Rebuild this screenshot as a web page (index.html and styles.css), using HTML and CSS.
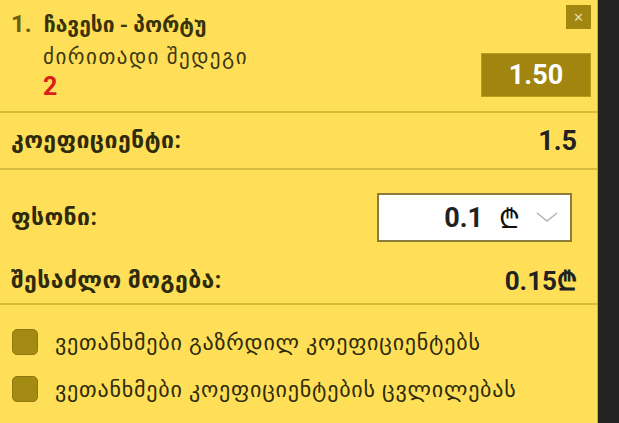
FILE: index.html
```html
<!DOCTYPE html>
<html lang="ka">
<head>
  <meta charset="UTF-8">
  <title>ბილეთი</title>
  <link rel="stylesheet" href="styles.css">
</head>
<body>
  <div class="page">
    <div class="slip">
      <div class="event">
        <div class="event-info">
          <div class="event-title"><span class="num">1.</span><span class="teams">ჩავესი - პორტუ</span></div>
          <div class="market">ძირითადი შედეგი</div>
          <div class="pick">2</div>
        </div>
        <div class="event-side">
          <button class="close">&#x2715;</button>
          <div class="odd">1.50</div>
        </div>
      </div>

      <div class="row coef">
        <span class="label">კოეფიციენტი:</span>
        <span class="value">1.5</span>
      </div>

      <div class="stake-block">
        <div class="row stake">
          <span class="label">ფსონი:</span>
          <div class="stake-input">
            <span class="amount">0.1</span>
            <span class="lari">₾</span>
            <svg class="chev" width="22" height="12" viewBox="0 0 22 12"><path d="M1 1 L11 9 L21 1" fill="none" stroke="#b5b5b5" stroke-width="1.6"/></svg>
          </div>
        </div>
        <div class="row win">
          <span class="label">შესაძლო მოგება:</span>
          <span class="value">0.15₾</span>
        </div>
      </div>

      <div class="options">
        <label class="opt"><span class="box"></span>ვეთანხმები გაზრდილ კოეფიციენტებს</label>
        <label class="opt"><span class="box"></span>ვეთანხმები კოეფიციენტების ცვლილებას</label>
      </div>
    </div>
    <div class="side"></div>
  </div>
</body>
</html>
```

FILE: styles.css
```css
* { margin: 0; padding: 0; box-sizing: border-box; }
body {
  font-family: Roboto, "DejaVu Sans", sans-serif;
  color: #2e2a10;
  background: #222;
}
.page {
  display: flex;
  width: 619px;
  height: 423px;
  overflow: hidden;
}
.slip {
  width: 598px;
  background: #fedf57;
  border-right: 1px solid #c9ad2c;
}
.side {
  flex: 1;
  background: #232323;
}
.event {
  display: flex;
  justify-content: space-between;
  height: 113px;
  padding: 5px 6px 0 11px;
  border-bottom: 2px solid #d6bb3c;
}
.event-title {
  font-size: 24px;
  line-height: 28px;
  font-weight: bold;
  margin-top: 5px;
  color: #3a3208;
}
.num {
  color: #6e5f14;
  margin-right: 12px;
}
.teams {
  font-size: 21px;
}
.market {
  font-size: 21px;
  line-height: 24px;
  letter-spacing: 1.5px;
  margin: 6px 0 0 32px;
  color: #3e3713;
}
.pick {
  font-size: 25px;
  font-weight: bold;
  color: #d8201c;
  margin: 5px 0 0 32px;
  line-height: 26px;
}
.event-side {
  display: flex;
  flex-direction: column;
  align-items: flex-end;
}
.close {
  width: 25px;
  height: 24px;
  border: none;
  background: #a1870f;
  color: #e8dca6;
  font-size: 13px;
  font-family: "DejaVu Sans", sans-serif;
}
.odd {
  margin-top: 24px;
  width: 110px;
  height: 44px;
  background: #a1850e;
  border: 1px solid #b89c1c;
  color: #fff;
  font-size: 27px;
  font-weight: bold;
  display: flex;
  justify-content: center;
  align-items: center;
}
.row {
  display: flex;
  justify-content: space-between;
  align-items: center;
  padding: 0 20px 0 11px;
}
.label {
  font-size: 23px;
  font-weight: bold;
  letter-spacing: 0.4px;
  color: #2f2a0c;
}
.value {
  font-size: 27px;
  font-weight: bold;
  color: #222;
}
.coef {
  height: 57px;
  border-bottom: 2px solid #d6bb3c;
}
.stake-block {
  height: 135px;
  padding-top: 23px;
  border-bottom: 2px solid #d6bb3c;
}
.stake {
  padding-right: 25px;
}
.stake-input {
  width: 195px;
  height: 49px;
  background: #fff;
  border: 2px solid #8c7d3c;
  display: flex;
  justify-content: flex-end;
  align-items: center;
  padding-right: 12px;
}
.amount {
  font-size: 27px;
  font-weight: bold;
  color: #222;
  margin-right: 16px;
}
.lari {
  font-size: 27px;
  color: #111;
  margin-right: 16px;
}
.win {
  height: 30px;
  margin-top: 23px;
}
.win .value {
  font-size: 26px;
}
.options {
  padding: 24px 0 0 12px;
  display: flex;
  flex-direction: column;
  gap: 21px;
}
.opt {
  display: flex;
  align-items: center;
  height: 26px;
  font-size: 22px;
  letter-spacing: 0.8px;
  color: #2f2a0c;
}
.box {
  width: 26px;
  height: 26px;
  background: #a38a12;
  border: 1px solid #8f7810;
  border-radius: 5px;
  margin-right: 17px;
}
```
